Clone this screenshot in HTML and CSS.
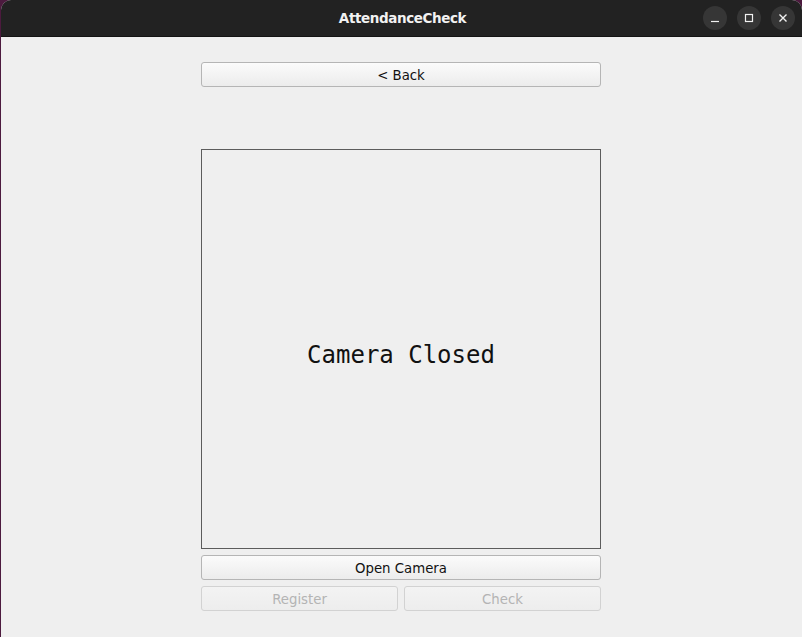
FILE: index.html
```html
<!DOCTYPE html>
<html>
<head>
<meta charset="utf-8">
<link rel="stylesheet" href="styles.css">
</head>
<body>
<div class="window">
  <div class="titlebar">
    <div class="title">AttendanceCheck</div>
    <div class="controls">
      <span class="ctl"><svg width="24" height="24" viewBox="0 0 24 24"><line x1="8" y1="15.5" x2="16" y2="15.5" stroke="#f2f2f2" stroke-width="1.2"/></svg></span>
      <span class="ctl"><svg width="24" height="24" viewBox="0 0 24 24"><rect x="8.5" y="8.5" width="7" height="7" fill="none" stroke="#f2f2f2" stroke-width="1.2"/></svg></span>
      <span class="ctl"><svg width="24" height="24" viewBox="0 0 24 24"><path d="M8.5 8.5 L15.5 15.5 M15.5 8.5 L8.5 15.5" stroke="#f2f2f2" stroke-width="1.4"/></svg></span>
    </div>
  </div>
  <div class="content">
    <div class="column">
      <button class="btn">&lt; Back</button>
      <div class="camera">Camera Closed</div>
      <button class="btn btn-open">Open Camera</button>
      <div class="row">
        <button class="btn" disabled>Register</button>
        <button class="btn" disabled>Check</button>
      </div>
    </div>
  </div>
</div>
</body>
</html>
```
FILE: styles.css
```css
html, body {
  margin: 0;
  padding: 0;
  width: 802px;
  height: 637px;
  overflow: hidden;
  background: #4c1a3e;
}
.window {
  width: 801px;
  height: 637px;
  margin-left: 1px;
  border-radius: 10px 10px 0 0;
  overflow: hidden;
  background: #efefef;
  display: flex;
  flex-direction: column;
}
.titlebar {
  height: 36px;
  background: #222222;
  border-bottom: 1px solid #141414;
  display: flex;
  align-items: center;
  justify-content: center;
  position: relative;
}
.title {
  color: #f2f2f2;
  font-family: "DejaVu Sans", sans-serif;
  font-weight: bold;
  font-size: 13.5px;
  letter-spacing: -0.4px;
  margin-left: 2px;
}
.controls {
  position: absolute;
  right: 7px;
  top: 6px;
  display: flex;
  gap: 10px;
}
.ctl {
  width: 24px;
  height: 24px;
  border-radius: 50%;
  background: #363636;
  display: block;
}
.ctl svg { display: block; }
.content {
  flex: 1;
  display: flex;
  justify-content: center;
  padding-top: 25px;
  padding-right: 1px;
}
.column {
  width: 400px;
  display: flex;
  flex-direction: column;
}
.btn {
  height: 25px;
  margin: 0;
  padding: 2px 0 0 0;
  border: 1px solid #b5b5b5;
  border-radius: 3px;
  background: linear-gradient(#fbfbfb, #ececec);
  font-family: "DejaVu Sans", sans-serif;
  font-size: 13.3px;
  color: #111;
  box-sizing: border-box;
  width: 100%;
}
.btn:disabled {
  color: #b4b4b4;
  border-color: #d2d2d2;
  background: linear-gradient(#f3f3f3, #ededed);
}
.camera {
  margin-top: 62px;
  height: 400px;
  box-sizing: border-box;
  border: 1px solid #5c5c5c;
  display: flex;
  align-items: center;
  justify-content: center;
  font-family: "DejaVu Sans Mono", monospace;
  font-size: 24px;
  color: #111;
  padding-top: 11px;
}
.btn-open { margin-top: 6px; }
.row {
  margin-top: 6px;
  display: flex;
  gap: 6px;
}
.row .btn { flex: 1; }
```
